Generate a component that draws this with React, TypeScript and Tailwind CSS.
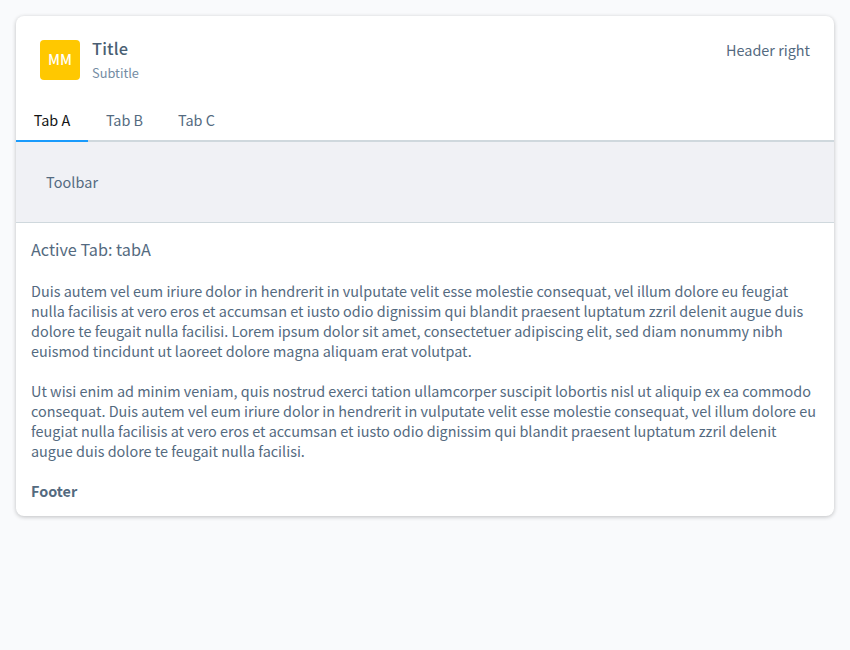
const tabs = ['Tab A', 'Tab B', 'Tab C'];

export default function App() {
  return (
    <div className="min-h-screen bg-[#f9fafc] p-4 font-['Noto_Sans_CJK_SC','Noto_Sans',sans-serif] text-[14.42px] leading-5 text-[#546a80]">
      <div className="flex h-[500px] flex-col overflow-hidden rounded-lg bg-white shadow-[0_1px_4px_rgba(0,0,0,0.24)]">
        <header className="flex h-[84px] items-start justify-between px-6 pt-[22px]">
          <div className="flex gap-3">
            <div className="mt-0.5 flex size-10 items-center justify-center rounded bg-[#ffc800] pb-0.5 font-medium text-white">MM</div>
            <div>
              <h1 className="text-[16.4px] leading-5 font-medium tracking-[0.15px] text-[#4a5f73]">Title</h1>
              <p className="mt-[5px] text-[12.8px] text-[#748ca3]">Subtitle</p>
            </div>
          </div>
          <div className="pt-0.5">Header right</div>
        </header>
        <nav className="flex h-[42px] shadow-[inset_0_-2px_#cfd8dd]">
          {tabs.map((tab, i) => (
            <button key={tab} className={i === 0 ? 'w-[72px] border-b-2 border-[#1a9bfc] text-[#131415]' : 'w-[72px] border-b-2 border-transparent pl-px'}>
              {tab}
            </button>
          ))}
        </nav>
        <div className="flex h-[81px] items-center border-b border-[#cfd8dd] bg-[#f0f1f5] px-[30px] tracking-[0.1px]">Toolbar</div>
        <main className="px-[15px] pt-3.5">
          <h2 className="text-[16.2px] leading-6">Active Tab: tabA</h2>
          <p className="mt-5 whitespace-nowrap tracking-[0.008px]">
            Duis autem vel eum iriure dolor in hendrerit in vulputate velit esse molestie consequat, vel illum dolore eu feugiat<br />
            nulla facilisis at vero eros et accumsan et iusto odio dignissim qui blandit praesent luptatum zzril delenit augue duis<br />
            dolore te feugait nulla facilisi. Lorem ipsum dolor sit amet, consectetuer adipiscing elit, sed diam nonummy nibh<br />
            euismod tincidunt ut laoreet dolore magna aliquam erat volutpat.
          </p>
          <p className="mt-5 whitespace-nowrap tracking-[0.008px]">
            Ut wisi enim ad minim veniam, quis nostrud exerci tation ullamcorper suscipit lobortis nisl ut aliquip ex ea commodo<br />
            consequat. Duis autem vel eum iriure dolor in hendrerit in vulputate velit esse molestie consequat, vel illum dolore eu<br />
            feugiat nulla facilisis at vero eros et accumsan et iusto odio dignissim qui blandit praesent luptatum zzril delenit<br />
            augue duis dolore te feugait nulla facilisi.
          </p>
          <footer className="mt-5 font-bold">Footer</footer>
        </main>
      </div>
    </div>
  );
}
